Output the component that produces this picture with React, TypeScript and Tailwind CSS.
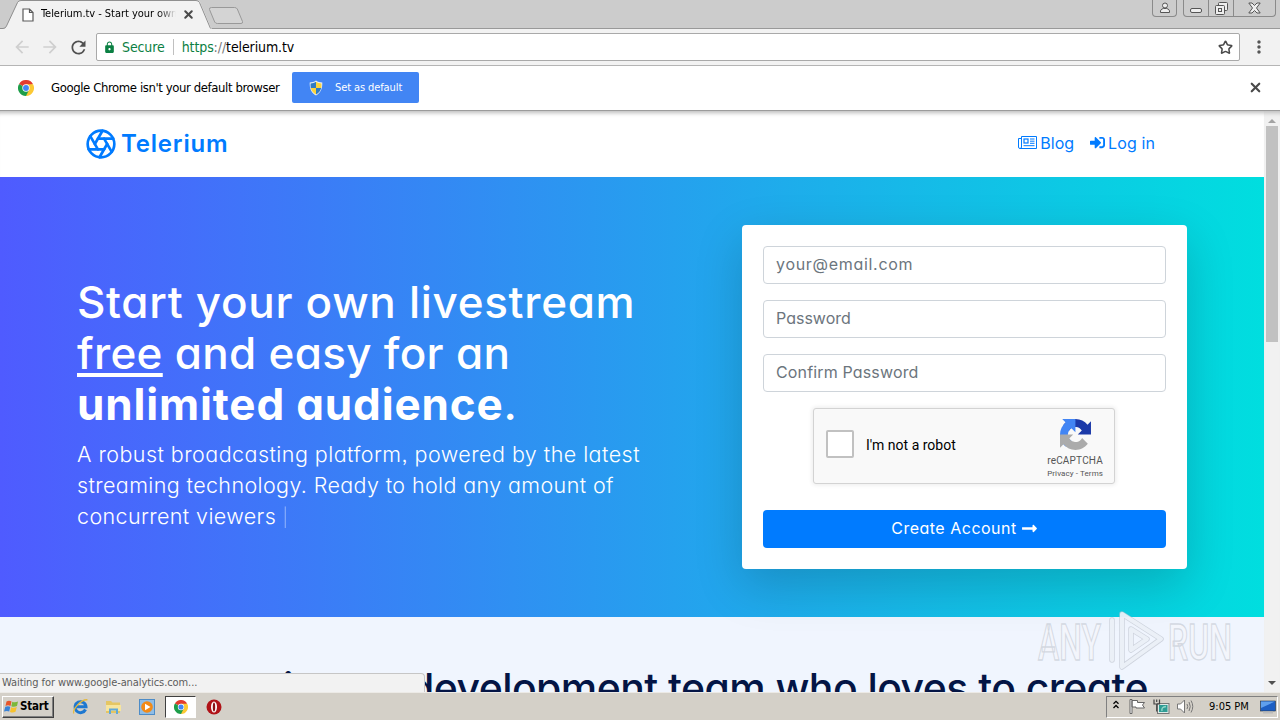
import { Aperture, Star, X } from 'lucide-react';
import { FaLongArrowAltRight, FaSignInAlt } from 'react-icons/fa';
import { MdArrowBack, MdArrowForward, MdLock, MdMoreVert, MdRefresh } from 'react-icons/md';

function ChromeLogo({ size }: { size: number }) {
  return (
    <svg width={size} height={size} viewBox="0 0 48 48">
      <path d="M24 24 3.2 12A24 24 0 0 1 44.8 12Z" fill="#e33b2e" />
      <path d="M24 24 44.8 12A24 24 0 0 1 24 48Z" fill="#fcc934" />
      <path d="M24 24V48A24 24 0 0 1 3.2 12Z" fill="#1e9e4a" />
      <path d="M24 13H44.8L34 30Z" fill="#fcc934" />
      <path d="M33.5 29.5 24 48 19 34Z" fill="#1e9e4a" />
      <circle cx="24" cy="24" r="11" fill="#fff" />
      <circle cx="24" cy="24" r="8.8" fill="#4285f4" />
    </svg>
  );
}

function ShieldIcon() {
  return (
    <svg width="14" height="16" viewBox="0 0 14 16">
      <path d="M7 .5C9 2 11 2.4 13.3 2.5 13.5 9 11.5 13 7 15.5 2.5 13 .5 9 .7 2.5 3 2.4 5 2 7 .5Z" fill="#e8eef5" />
      <path d="M7 1.8V8H1.8C1.5 6.5 1.5 5 1.6 3.4 3.6 3.2 5.2 2.9 7 1.8Z" fill="#2f7bc4" />
      <path d="M7 1.8V8h5.2c.3-1.5.3-3 .2-4.6C10.4 3.2 8.8 2.9 7 1.8Z" fill="#fbd43d" />
      <path d="M7 8v6.5C4.2 12.8 2.5 11 1.8 8Z" fill="#fbd43d" />
      <path d="M7 8v6.5c2.8-1.7 4.5-3.5 5.2-6.5Z" fill="#2f7bc4" />
    </svg>
  );
}

function NewspaperIcon() {
  return (
    <svg width="19" height="15" viewBox="0 0 19 15" fill="none" stroke="currentColor">
      <path d="M3.5 1.5H18.5V13.5H2Q.5 13.5 .5 12V3.5H3.5M3.5 1.5V12Q3.5 13.5 2 13.5" />
      <rect x="6" y="4" width="4" height="4" strokeWidth="1.2" />
      <path d="M12 4H16.5M12 6.2H16.5M12 8.3H16.5M5.5 10.7H16.5" />
    </svg>
  );
}

function RecaptchaLogo() {
  return (
    <svg width="31" height="31" viewBox="0 0 64 64">
      <path
        fill="#1c3aa9"
        d="M64 31.955l-.033-1.37V4.687l-7.16 7.16C50.948 4.674 42.033.093 32.05.093c-10.4 0-19.622 4.96-25.458 12.64l11.736 11.86a15.55 15.55 0 0 1 4.754-5.334c2.05-1.6 4.952-2.906 8.968-2.906.485 0 .86.057 1.135.163 4.976.393 9.288 3.14 11.828 7.124l-8.307 8.307L64 31.953"
      />
      <path
        fill="#4285f4"
        d="M31.862.094l-1.37.033H4.594l7.16 7.16C4.58 13.147 0 22.06 0 32.046c0 10.4 4.96 19.622 12.64 25.458L24.5 45.768a15.55 15.55 0 0 1-5.334-4.754c-1.6-2.05-2.906-4.952-2.906-8.968 0-.485.057-.86.163-1.135.393-4.976 3.14-9.288 7.124-11.828l8.307 8.307L31.86.095"
      />
      <path
        fill="#ababab"
        d="M.001 32.045l.033 1.37v25.898l7.16-7.16c5.86 7.173 14.774 11.754 24.76 11.754 10.4 0 19.622-4.96 25.458-12.64l-11.736-11.86a15.55 15.55 0 0 1-4.754 5.334c-2.05 1.6-4.952 2.906-8.968 2.906-.485 0-.86-.057-1.135-.163-4.976-.393-9.288-3.14-11.828-7.124l8.307-8.307c-10.522.04-22.4.066-27.295-.005"
      />
    </svg>
  );
}

function TabStrip() {
  return (
    <div className="flex h-[29px] justify-between bg-[#cccccc] shadow-[inset_0_-1px_0_#999]">
      <div className="flex">
        <div className="relative h-[29px] w-[212px]">
          <svg className="absolute left-0 top-0" width="212" height="29" viewBox="0 0 212 29">
            <path d="M0 29 5.5 28 18 2Q19 .5 21 .5H197Q199 .5 200 2L211 28 212 29Z" fill="#f2f2f2" />
            <path d="M0 28.5H3Q5.5 28.5 6.5 26L17.5 2.5Q18.5 .5 21 .5H196Q198.5 .5 199.5 2.5L210.5 28.5" fill="none" stroke="#8f8f8f" />
          </svg>
          <div className="relative flex h-[29px] items-center pl-[22px]">
            <svg width="12" height="14" viewBox="0 0 12 14" fill="#fff" stroke="#5a5a5a" strokeWidth="1.2">
              <path d="M1 1H7.5L11 4.5V13H1ZM7.5 1V4.5H11" />
            </svg>
            <div className="ml-[7px] w-[135px] overflow-hidden whitespace-nowrap bg-linear-to-r from-black from-85% to-[#f2f2f2] bg-clip-text text-[11px] tracking-[-0.05px] text-transparent">
              Telerium.tv - Start your own
            </div>
            <X size={13} strokeWidth={3.8} className="ml-[6px] text-[#4a4a4a]" />
          </div>
        </div>
        <svg className="-ml-[3px]" width="36" height="29" viewBox="0 0 36 29">
          <path d="M2.5 7.5H25.5Q27.5 7.5 28.3 9L33.5 21.5Q34 23.5 32 23.5H8.5Q6.5 23.5 5.7 22L.5 9.5Q0 7.5 2.5 7.5Z" fill="#d4d4d4" stroke="#999" />
        </svg>
      </div>
      <div className="flex h-[17px] pr-1">
        <div className="mr-[6px] flex w-[25px] items-center justify-center rounded-b-[4px] border border-t-0 border-[#8a8a8a]">
          <svg width="12" height="12" viewBox="0 0 12 12" fill="#eee" stroke="#555">
            <circle cx="6" cy="3.5" r="2.5" />
            <path d="M1.5 10.5C1 8 2.5 7 4.5 6.5h3C9.5 7 11 8 10.5 10.5Z" />
          </svg>
        </div>
        <div className="flex w-[93px] rounded-b-[4px] border border-t-0 border-[#8a8a8a]">
          <div className="flex w-[25px] items-end justify-center border-r border-[#8a8a8a] pb-[3px]">
            <div className="h-[5px] w-[12px] rounded-[2px] border border-[#555] bg-[#eee]" />
          </div>
          <div className="flex w-[25px] items-center justify-center border-r border-[#8a8a8a]">
            <svg width="13" height="13" viewBox="0 0 13 13" fill="#eee" stroke="#555">
              <rect x="3.5" y=".5" width="9" height="8" rx="1" />
              <rect x=".5" y="3.5" width="9" height="9" rx="1" />
              <rect x="3.5" y="6.5" width="3" height="3" />
            </svg>
          </div>
          <div className="flex flex-1 items-center justify-center">
            <svg width="13" height="12" viewBox="0 0 13 12" fill="#eee" stroke="#555">
              <path d="M.8 1H4L6.5 3.5 9 1H12.2L8.5 6 12.2 11H9L6.5 8.5 4 11H.8L4.5 6Z" />
            </svg>
          </div>
        </div>
      </div>
    </div>
  );
}

function Toolbar() {
  return (
    <div className="flex h-[37px] items-center border-b border-[#b5b5b5] bg-[#f2f2f2]">
      <MdArrowBack size={20} className="ml-3 text-[#cfcfcf]" />
      <MdArrowForward size={20} className="ml-2 text-[#cfcfcf]" />
      <MdRefresh size={21} className="ml-2 text-[#505050]" />
      <div className="ml-[7px] flex h-[28px] w-[1144px] items-center rounded-[2px] border border-[#a9a9a9] bg-white text-[14px]">
        <MdLock size={13} className="ml-[6px] text-[#0b8043]" />
        <span className="ml-[6px] tracking-[-0.1px] text-[#0b8043]">Secure</span>
        <span className="mx-2 h-4 w-px bg-[#c0c0c0]" />
        <span className="tracking-[-0.1px] text-black">
          <span className="text-[#0b8043]">https</span>
          <span className="text-[#777]">://</span>telerium.tv
        </span>
        <Star size={15} strokeWidth={2.5} className="ml-auto mr-[6px] text-[#4a4a4a]" />
      </div>
      <MdMoreVert size={20} className="ml-[9px] text-[#555]" />
    </div>
  );
}

function DefaultBrowserBar() {
  return (
    <div className="flex h-[45px] items-center border-b border-[#9b9b9b] bg-white pb-px">
      <div className="ml-[18px]">
        <ChromeLogo size={16} />
      </div>
      <span className="ml-[17px] w-[229px] whitespace-nowrap text-[13px] tracking-[-0.4px] text-black">
        Google Chrome isn't your default browser
      </span>
      <button className="ml-3 flex h-[31px] w-[127px] items-center rounded-[2px] bg-[#4285f4] pl-[17px] text-[11px] tracking-[-0.1px] text-white">
        <ShieldIcon />
        <span className="ml-3 pt-px">Set as default</span>
      </button>
      <X size={15} strokeWidth={3.5} className="ml-auto mr-[17px] text-[#4a4a4a]" />
    </div>
  );
}

function SiteHeader() {
  return (
    <header className="flex h-[66px] items-center justify-between bg-white pb-px pl-[85px] pr-[109px] text-[#007bff] shadow-[inset_0_6px_4px_-4px_#bbb]">
      <div className="flex items-center">
        <Aperture size={32} strokeWidth={2} />
        <span className="ml-1 text-[24px] font-semibold tracking-[0.8px]">Telerium</span>
      </div>
      <nav className="flex items-center pb-[2px] text-[16px]">
        <NewspaperIcon />
        <span className="ml-[3px]">Blog</span>
        <FaSignInAlt size={15} className="ml-4" />
        <span className="ml-[3px] tracking-[0.1px]">Log in</span>
      </nav>
    </header>
  );
}

function Field({ label, className = '' }: { label: string; className?: string }) {
  return (
    <div
      className={`mb-4 flex h-[38px] items-center rounded-[4px] border border-[#ced4da] pb-[2px] pl-3 text-[16px] text-[#6c757d] ${className}`}
    >
      {label}
    </div>
  );
}

function SignupCard() {
  return (
    <div className="flex h-[344px] w-[445px] flex-col rounded-[4px] bg-white p-[21px] shadow-[0_16px_48px_rgba(0,0,0,0.175)]">
      <Field label="your@email.com" className="tracking-[0.7px]" />
      <Field label="Password" />
      <Field label="Confirm Password" className="tracking-[0.15px]" />
      <div className="mr-px flex h-[76px] w-[302px] self-center rounded-[3px] border border-[#d3d3d3] bg-[#f9f9f9] pl-3 pr-[11px] font-[Roboto,sans-serif] shadow-[0_0_4px_1px_rgba(0,0,0,0.08)]">
        <div className="mt-[21px] h-[28px] w-[28px] rounded-[2px] border-2 border-[#c1c1c1] bg-white" />
        <span className="ml-3 mt-[26px] text-[14px] leading-5 text-black">I'm not a robot</span>
        <div className="ml-auto mt-[10px] flex flex-col items-center text-[#555]">
          <RecaptchaLogo />
          <span className="mt-[5px] text-[10px] leading-[12px] tracking-[0.2px]">reCAPTCHA</span>
          <span className="pt-px text-[8px] leading-[12px] tracking-[0.1px]">Privacy - Terms</span>
        </div>
      </div>
      <button className="mt-[26px] flex h-[38px] items-center justify-center rounded-[4px] bg-[#007bff] pb-[2px] text-[16px] tracking-[0.5px] text-white">
        Create Account
        <FaLongArrowAltRight size={17} className="ml-1" />
      </button>
    </div>
  );
}

function Hero() {
  return (
    <section className="flex h-[440px] items-center justify-between bg-linear-to-r/srgb from-[#4f5bff] to-[#00dedf] pl-[77px] pr-[77px] text-white">
      <div className="w-[620px] whitespace-nowrap pt-[15px]">
        <h1 className="text-[44px] font-medium leading-[51px]">
          <span className="block tracking-[0.7px]">Start your own livestream</span>
          <span className="block tracking-[0.3px]">
            <span className="underline decoration-4 underline-offset-[4px]">free</span> and easy for an
          </span>
          <span className="block tracking-[0.85px]"><b>unlimited audience</b>.</span>
        </h1>
        <p className="mt-[9px] text-[21.5px] font-light leading-[31px]">
          <span className="block tracking-[0.45px]">A robust broadcasting platform, powered by the latest</span>
          <span className="block tracking-[0.38px]">streaming technology. Ready to hold any amount of</span>
          <span className="block tracking-[0.37px]">concurrent viewers <span className="text-[18px] opacity-40">|</span></span>
        </p>
      </div>
      <SignupCard />
    </section>
  );
}

function Scrollbar() {
  return (
    <div className="flex w-4 flex-col items-center bg-[#f1f1f1] shadow-[inset_0_6px_4px_-4px_#bbb]">
      <div className="flex h-[15px] items-center pt-1">
        <div className="border-x-4 border-b-4 border-x-transparent border-b-[#a3a3a3]" />
      </div>
      <div className="h-[216px] w-3 bg-[#c1c1c1]" />
      <div className="mb-[7px] mt-auto border-x-4 border-t-4 border-x-transparent border-t-[#505050]" />
    </div>
  );
}

function Watermark() {
  return (
    <svg className="absolute left-[1034px] top-[606px]" width="204" height="68" viewBox="0 0 204 68">
      <g fill="#f4f6fb" fillOpacity="0.85" stroke="#bfc5cf" strokeOpacity="0.6" strokeWidth="1.4" fontFamily="Roboto, sans-serif" fontSize="50" fontWeight="500">
        <text x="4" y="54" textLength="63" lengthAdjust="spacingAndGlyphs">ANY</text>
        <text x="134" y="54" textLength="64" lengthAdjust="spacingAndGlyphs">RUN</text>
      </g>
      <g fill="none" strokeLinejoin="round" strokeLinecap="round">
        <path d="M88 8 127 33 88 61ZM97 23 113 33 97 44ZM78 14V54" stroke="#bfc5cf" strokeOpacity="0.7" strokeWidth="5.5" />
        <path d="M88 8 127 33 88 61ZM97 23 113 33 97 44ZM78 14V54" stroke="#f0f4fb" strokeOpacity="0.85" strokeWidth="4" />
      </g>
    </svg>
  );
}

function Taskbar() {
  return (
    <div className="flex h-[28px] items-center border-t border-[#eceae6] bg-[#d4d0c8] text-[11px] text-black">
      <div className="ml-[2px] flex h-[22px] w-[52px] items-center border border-b-[#404040] border-l-white border-r-[#404040] border-t-white pl-px shadow-[inset_-1px_-1px_0_#808080]">
        <svg width="15" height="15" viewBox="0 0 15 15">
          <path d="M2.5 2.5Q5 1 7.5 2.5L6.5 7Q4 5.5 1.5 7Z" fill="#e8562a" />
          <path d="M8.3 2.8Q11 4 14 2.5L13 7Q10 8.5 7.3 7.3Z" fill="#7cb83a" />
          <path d="M1.3 7.8Q4 6.5 6.3 7.8L5.2 12.5Q3 11.3 0 12.5Z" fill="#3a83d6" />
          <path d="M7.1 8.2Q10 9.3 12.8 8L11.5 12.7Q9 14 6 12.9Z" fill="#f7c22e" />
        </svg>
        <b className="ml-px pt-px text-[11.5px] tracking-[-0.2px]">Start</b>
      </div>
      <svg className="ml-[18px]" width="17" height="17" viewBox="0 0 17 17" fill="none">
        <path d="M13.5 11.5A5.5 5.5 0 1 1 14 8.8H4.5" stroke="#1e78d0" strokeWidth="3" />
        <path d="M2 15.5C-1 13 9 1 15.5 1.8" stroke="#e5b93c" strokeWidth="1.3" />
      </svg>
      <svg className="ml-4" width="17" height="17" viewBox="0 0 17 17">
        <path d="M1 3H6L7.5 4.5H15V15H1Z" fill="#e5c663" />
        <path d="M1 7H16V13H1Z" fill="#f7e59d" />
        <path d="M4 16V10.5H13V16H11V12.5H6V16Z" fill="#62a9d8" />
      </svg>
      <svg className="ml-[17px]" width="16" height="16" viewBox="0 0 16 16">
        <rect x=".5" y=".5" width="15" height="15" fill="#8fbde6" stroke="#4d8cc7" />
        <circle cx="8" cy="8" r="5.8" fill="#f28a17" />
        <path d="M6 4.7 11.5 8 6 11.3Z" fill="#fff" />
      </svg>
      <div className="ml-[10px] flex h-[22px] w-[31px] items-center justify-center border border-b-white border-l-[#404040] border-r-white border-t-[#404040] bg-white">
        <ChromeLogo size={14} />
      </div>
      <svg className="ml-[10px]" width="16" height="16" viewBox="0 0 16 16">
        <circle cx="8" cy="8" r="7.5" fill="#b01217" />
        <ellipse cx="8" cy="8" rx="3" ry="5.5" fill="#fff" />
        <ellipse cx="8" cy="8" rx="1.2" ry="4.5" fill="#8a1013" />
      </svg>
      <div className="ml-auto mr-[2px] flex h-[22px] w-[172px] items-center border border-b-white border-l-[#808080] border-r-white border-t-[#808080] pl-[6px]">
        <svg className="-mt-1" width="6" height="9" viewBox="0 0 6 9" fill="none" stroke="#000" strokeWidth="1.3">
          <path d="M.5 3.8 3 1.3 5.5 3.8M.5 8 3 5.5 5.5 8" />
        </svg>
        <svg className="ml-[10px]" width="17" height="15" viewBox="0 0 17 15" fill="#fff" stroke="#666">
          <path d="M1 .5H3V14.5H1ZM3 1.5H8.5V3.5H15.5L13.5 6 15.5 9H7V8H3Z" />
        </svg>
        <svg className="ml-[7px]" width="17" height="16" viewBox="0 0 17 16">
          <rect x="4.5" y="4.5" width="11.5" height="10" fill="#dfeae6" stroke="#777" />
          <rect x="6" y="6" width="8.5" height="7" fill="#2f9c94" />
          <path d="M9 12Q8 8 13 7.5" stroke="#8fd6c8" strokeWidth="1.5" fill="none" />
          <path d="M1 .5V5H6.5V.5M3.7 5V12.5M3.7 .5V3" fill="none" stroke="#444" strokeWidth="1.2" />
        </svg>
        <svg className="ml-[7px]" width="17" height="15" viewBox="0 0 17 15" fill="#fff" stroke="#777">
          <path d="M.5 5H3.5L7.5 1V14L3.5 10H.5Z" />
          <path d="M10 5Q11.5 7.5 10 10M12 3Q14.5 7.5 12 12M14 1.5Q17.5 7.5 14 13.5" fill="none" />
        </svg>
        <span className="ml-[15px] whitespace-nowrap pt-[2px]">9:05 PM</span>
        <svg className="ml-auto mr-px" width="16" height="14" viewBox="0 0 16 14">
          <rect x=".5" y="1" width="15" height="10" fill="#1d5fc4" stroke="#234" strokeWidth=".6" />
          <path d="M1 1.5H15L1 8Z" fill="#5fa0ee" />
          <path d="M3 12.5H13" stroke="#bbb" strokeWidth="2" />
        </svg>
      </div>
    </div>
  );
}

export default function App() {
  return (
    <div className="relative flex h-[720px] w-[1280px] flex-col overflow-hidden bg-white font-['DejaVu_Sans_Condensed','DejaVu_Sans',sans-serif]">
      <TabStrip />
      <Toolbar />
      <DefaultBrowserBar />
      <div className="relative flex h-[581px] overflow-hidden">
        <main className="flex-1 bg-[#f0f5fe] font-[Inter,sans-serif] [font-feature-settings:'cv11','ss03']">
          <SiteHeader />
          <Hero />
          <h2 className="mt-[46px] whitespace-nowrap pr-[116px] text-right text-[41px] font-medium leading-[50px] tracking-[-0.58px] text-[#041545]">
            A passi<span className="tracking-[-1.2px]">onate </span>development team who loves to create
          </h2>
        </main>
        <Scrollbar />
        <div className="absolute bottom-0 left-0 flex h-[19px] w-[425px] items-center rounded-tr-[4px] border-r border-t border-[#c6c6c6] bg-[#f2f2f2] pl-[2px] pt-px text-[11px] tracking-[-0.08px] text-[#5c5c5c]">
          Waiting for www.google-analytics.com...
        </div>
      </div>
      <Taskbar />
      <Watermark />
    </div>
  );
}
